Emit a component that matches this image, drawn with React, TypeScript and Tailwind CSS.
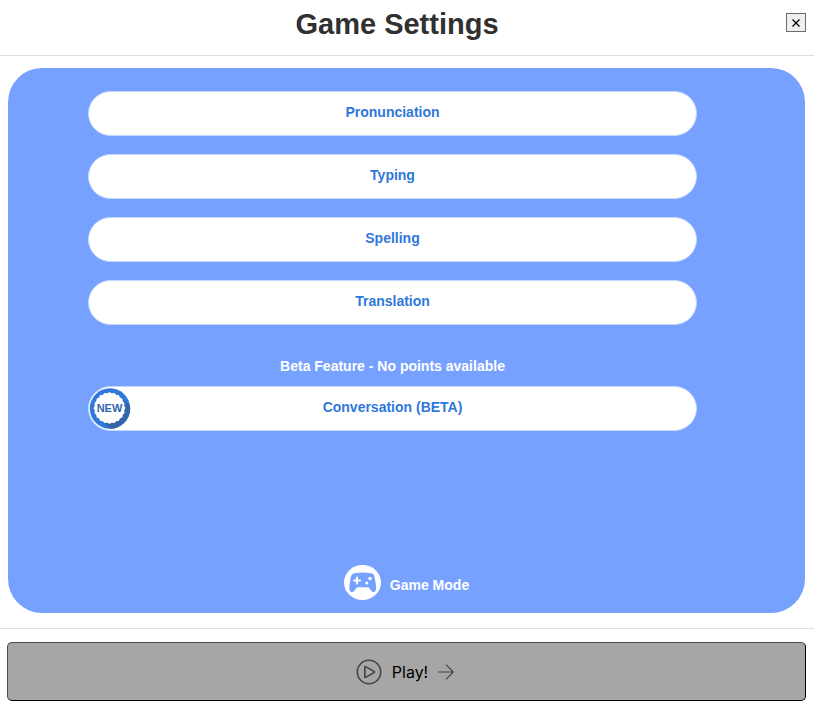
import React from 'react';

const modes = ['Pronunciation', 'Typing', 'Spelling', 'Translation'];

const pill =
  'relative flex h-[45px] w-full items-center justify-center rounded-full border border-[#c4d7ff] bg-white pb-1 text-sm font-bold text-[#2f78db]';

function sealPoints() {
  const points: string[] = [];
  for (let i = 0; i < 40; i++) {
    const radius = i % 2 === 0 ? 15 : 14;
    const angle = (i * Math.PI) / 20;
    points.push(`${20.5 + radius * Math.sin(angle)},${21 - radius * Math.cos(angle)}`);
  }
  return points.join(' ');
}

function NewBadge() {
  return (
    <svg className="absolute left-0 top-0 h-[42px] w-[42px]" viewBox="0 0 42 42" aria-label="New">
      <defs>
        <clipPath id="badge-disc">
          <circle cx="21" cy="21.5" r="20.2" />
        </clipPath>
      </defs>
      <g clipPath="url(#badge-disc)">
        <rect width="42" height="42" fill="#2e79da" />
        <path d="M32 11 50 28 42 50 29 49 11 32Z" fill="#3565a9" />
      </g>
      <polygon points={sealPoints()} fill="#fff" stroke="#fff" strokeWidth="1.6" strokeLinejoin="round" />
      <text
        x="20.5"
        y="25"
        textAnchor="middle"
        fill="#3267ae"
        fontSize="11"
        fontWeight="700"
        fontFamily="Liberation Sans, Arial, sans-serif"
      >
        NEW
      </text>
    </svg>
  );
}

function GamepadIcon() {
  return (
    <svg className="h-[35px] w-[37px]" viewBox="0 0 37 35" aria-hidden="true">
      <ellipse cx="18.5" cy="17.5" rx="18.5" ry="17.5" fill="#fff" />
      <path
        d="M10.5 8.2Q18.7 6.6 27 8.2C30.2 8.8 30.6 11 31.2 15C32 20 33 25.5 30.8 26.8C28.2 28.2 27.2 25.5 24.3 22.3H13.2C10.3 25.5 9.3 28.2 6.7 26.8C4.5 25.5 5.5 20 6.3 15C6.9 11 7.3 8.8 10.5 8.2Z"
        fill="#77a1ff"
      />
      <path d="M13 12.5v6M10 15.5h6" stroke="#fff" strokeWidth="2" strokeLinecap="round" />
      <circle cx="26" cy="13.5" r="1.7" fill="#fff" />
      <circle cx="22.8" cy="18" r="1.6" fill="#fff" />
    </svg>
  );
}

export default function App() {
  return (
    <main className="bg-white font-['Liberation_Sans',Arial,sans-serif]">
      <header className="flex h-14 items-start border-b border-[#dedfe1] px-2 pt-2">
        <h1 className="flex-1 text-center text-[29px] leading-8 font-bold text-[#303030]">Game Settings</h1>
        <button
          type="button"
          aria-label="Close"
          className="mt-[5px] flex h-[19px] w-5 items-center justify-center border border-[#6b6b6b] bg-[#efefef]"
        >
          <svg className="h-2 w-2" viewBox="0 0 8 8" aria-hidden="true">
            <path d="M.5.5 7.5 7.5M7.5.5.5 7.5" stroke="#000" strokeWidth="1.3" />
          </svg>
        </button>
      </header>

      <section className="mr-[9px] ml-2 mt-3 flex min-h-[545px] flex-col rounded-[34px] bg-[#77a1ff] pt-[23px] pb-[13px]">
        <div className="flex flex-col gap-[18px] pr-[108px] pl-20">
          {modes.map((mode) => (
            <button key={mode} type="button" className={pill}>
              {mode}
            </button>
          ))}
        </div>
        <div className="mt-[31px] pr-[108px] pl-20">
          <p className="mb-[10px] text-center text-sm leading-5 font-bold text-white">
            Beta Feature - No points available
          </p>
          <button type="button" className={pill}>
            <NewBadge />
            Conversation (BETA)
          </button>
        </div>
        <div className="mt-auto flex items-center justify-center gap-[9px] text-sm font-bold text-white">
          <GamepadIcon />
          <span className="pt-1">Game Mode</span>
        </div>
      </section>

      <footer className="mt-[15px] border-t border-[#dedfe1] pt-[13px] pr-2 pb-[9px] pl-[7px]">
        <button
          type="button"
          className="flex h-[59px] w-full items-center justify-center rounded-[5px] border border-t-[#4c4c4c] border-r-black border-b-black border-l-[#4c4c4c] bg-[#a6a6a6] pr-[3px] font-['Inter',sans-serif] text-base text-black"
        >
          <svg className="h-[26px] w-[26px]" viewBox="0 0 26 26" fill="none" stroke="#444" strokeWidth="1.6" aria-hidden="true">
            <circle cx="13" cy="13" r="11.7" />
            <path d="M8.8 8v10a.5.5 0 0 0 .8.4l8.8-5a.5.5 0 0 0 0-.8l-8.8-5a.5.5 0 0 0-.8.4Z" />
          </svg>
          <span className="mx-[10px]">Play!</span>
          <svg className="h-4 w-4" viewBox="0 0 16 16" fill="none" stroke="#3f3f3f" strokeWidth="1.1" aria-hidden="true">
            <path d="M.3 8h15M8 .7 15.3 8 8 15.3" />
          </svg>
        </button>
      </footer>
    </main>
  );
}
